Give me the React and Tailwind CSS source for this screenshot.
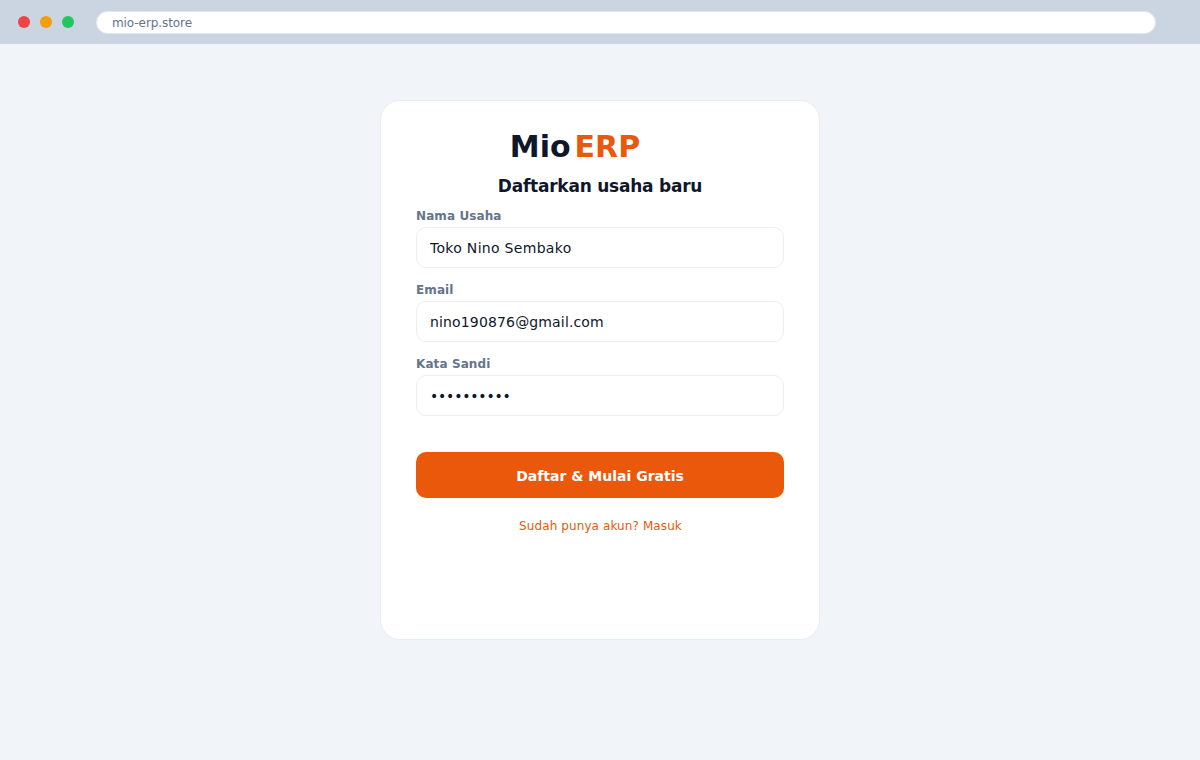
import React from 'react';

const Field = ({ label, value, type = 'text', spacing }) => (
  <div className="flex flex-col">
    <label className="h-[20px] text-[12px] leading-[18px] font-bold tracking-[0.1px] text-[#64748b]">{label}</label>
    <input
      type={type}
      defaultValue={value}
      className={`h-[41px] w-full rounded-[10px] border border-[#ebeff5] bg-white px-[13px] pt-px text-[14px] text-[#0f172a] outline-none ${spacing}`}
    />
  </div>
);

const App = () => {
  return (
    <div className="flex h-[760px] w-full flex-col overflow-hidden bg-[#f1f5f9] font-['DejaVu_Sans',sans-serif]">
      {/* Browser bar */}
      <div className="flex h-[44px] items-center bg-[#cbd5e1] pl-[18px]">
        <div className="flex gap-[10px]">
          <span className="h-3 w-3 rounded-full bg-[#ef4444]" />
          <span className="h-3 w-3 rounded-full bg-[#f59e0b]" />
          <span className="h-3 w-3 rounded-full bg-[#22c55e]" />
        </div>
        <div className="ml-[22px] flex h-[23px] w-[1060px] items-center rounded-full border border-[#e2e8f0] bg-white pt-px pl-[15px] text-[12px] tracking-[-0.08px] text-[#64748b]">
          mio-erp.store
        </div>
      </div>

      {/* Card */}
      <div className="flex justify-center pt-[56px]">
        <div className="flex h-[540px] w-[440px] flex-col rounded-[20px] border border-[#e8edf3] bg-white px-[35px] pt-[27px]">
          <div className="flex h-[38px] items-center justify-center gap-1 pr-[50px] text-[30px] leading-[38px] font-bold">
            <span className="text-[#0f172a]">Mio</span>
            <span className="text-[#ea580c]">ERP</span>
          </div>
          <h1 className="mt-[8px] h-[24px] text-center text-[17px] leading-[24px] font-bold tracking-[-0.235px] text-[#0f172a]">Daftarkan usaha baru</h1>
          <div className="mt-[9px] flex flex-col gap-[13px]">
            <Field label="Nama Usaha" value="Toko Nino Sembako" spacing="tracking-[0.3px]" />
            <Field label="Email" value="nino190876@gmail.com" spacing="tracking-[0.15px]" />
            <Field label="Kata Sandi" value="passwordxx" type="password" spacing="tracking-[-0.2px]" />
          </div>
          <button className="mt-[36px] h-[46px] w-full rounded-[10px] bg-[#ea580c] pt-[2px] text-[14px] font-bold text-white">
            Daftar &amp; Mulai Gratis
          </button>
          <p className="mt-[20px] pl-px text-center text-[12px] leading-[16px] tracking-[0.1px] text-[#ea580c]">Sudah punya akun? Masuk</p>
        </div>
      </div>
    </div>
  );
};

export default App;
